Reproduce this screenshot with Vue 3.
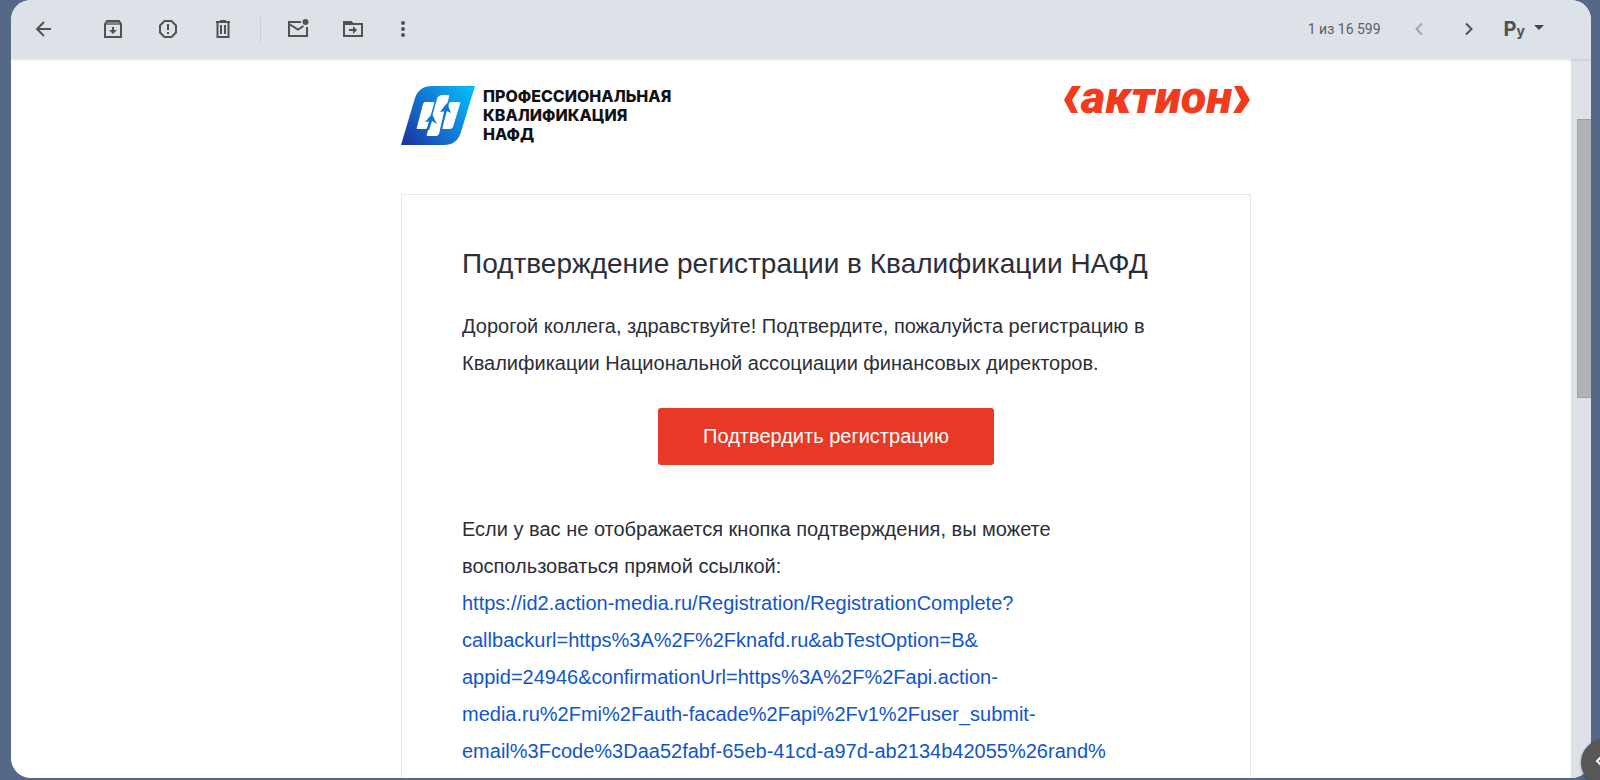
<script setup>
import { ref } from "vue";

const counter = ref("1 из 16 599");
const confirmLink =
  "https://id2.action-media.ru/Registration/RegistrationComplete?callbackurl=https%3A%2F%2Fknafd.ru&abTestOption=B&appid=24946";

// адрес разбит на строки так, как его переносит письмо
const linkLines = [
  "https://id2.action-media.ru/Registration/RegistrationComplete?",
  "callbackurl=https%3A%2F%2Fknafd.ru&abTestOption=B&",
  "appid=24946&confirmationUrl=https%3A%2F%2Fapi.action-",
  "media.ru%2Fmi%2Fauth-facade%2Fapi%2Fv1%2Fuser_submit-",
  "email%3Fcode%3Daa52fabf-65eb-41cd-a97d-ab2134b42055%26rand%",
];
</script>

<template>
  <div class="page">
    <main class="panel">
      <header class="toolbar">
        <button class="icon-button back" aria-label="Назад">
          <svg viewBox="0 0 20 20"><path d="M18 10H4M11 3l-7 7 7 7" class="stroke" /></svg>
        </button>
        <button class="icon-button" aria-label="Архивировать">
          <svg viewBox="0 0 20 20">
            <path d="M2 5l2-3h12l2 3v13H2z" class="stroke" />
            <path d="M2 3h16v3H2z" opacity=".65" />
            <path d="M9 8h2v3h3l-4 4-4-4h3z" />
          </svg>
        </button>
        <button class="icon-button" aria-label="В спам">
          <svg viewBox="0 0 20 20">
            <path d="M6.5 2h7L18 6.500v7L13.500 18h-7L2 13.500v-7z" class="stroke" />
            <path d="M9 5h2v6H9zM9 13h2v2H9z" />
          </svg>
        </button>
        <button class="icon-button" aria-label="Удалить">
          <svg viewBox="0 0 20 20">
            <path d="M4.500 4v14h11V4M3 3h14M7 2h6" class="stroke" />
            <path d="M7 6h2v9H7zM11 6h2v9h-2z" />
          </svg>
        </button>
        <span class="divider"></span>
        <button class="icon-button" aria-label="Отметить как непрочитанное">
          <svg viewBox="0 0 22 20" class="wide">
            <path d="M14 3H2v14h18V8M2 5l9 5.500 5.500-3.500" class="stroke" />
            <circle cx="18.500" cy="3" r="3" />
          </svg>
        </button>
        <button class="icon-button" aria-label="Переместить">
          <svg viewBox="0 0 22 20" class="wide">
            <path d="M2 3h7l2 2h9v12H2z" class="stroke" />
            <path d="M1 3h8l2 3H1zM7 10h4V7l4 4-4 4v-3H7z" />
          </svg>
        </button>
        <button class="icon-button more" aria-label="Ещё">
          <svg viewBox="0 0 20 20">
            <circle cx="10" cy="4" r="2" /><circle cx="10" cy="10" r="2" /><circle cx="10" cy="16" r="2" />
          </svg>
        </button>

        <span class="counter">{{ counter }}</span>
        <button class="icon-button" aria-label="Предыдущее" disabled>
          <svg viewBox="0 0 20 20"><path d="M13 4.500L7.500 10l5.500 5.500" class="stroke" /></svg>
        </button>
        <button class="icon-button" aria-label="Следующее">
          <svg viewBox="0 0 20 20"><path d="M7 4.500l5.500 5.500L7 15.500" class="stroke" /></svg>
        </button>
        <button class="language" aria-label="Способ ввода">
          <span class="language-name">Р<small>у</small></span>
          <svg viewBox="0 0 10 8"><path d="M0 0h10L5 5z" /></svg>
        </button>
      </header>

      <div class="scroll-area">
        <article class="mail">
          <div class="logos">
            <div class="nafd">
              <svg viewBox="0 0 74 59">
                <defs>
                  <linearGradient id="nafd-fill" x1="0" y1=".8" x2="1" y2=".2">
                    <stop offset="0" stop-color="#1b3aa6" />
                    <stop offset=".5" stop-color="#1379d4" />
                    <stop offset="1" stop-color="#05b8f8" />
                  </linearGradient>
                </defs>
                <path d="M0 59L14 12Q18 0 31 0H74L60 46Q56 59 43 59z" fill="url(#nafd-fill)" />
                <g fill="#fff">
                  <path d="M24 16h8q2 0 1 2l-7 24q0 1-2 1h-7q-2 0-1-2l6-23q1-2 2-2z" />
                  <path d="M42 9h5q2 0 1 2l-10 37q-1 2-3 2h-8q-2 0-1-2l10-35q1-4 6-4z" />
                  <path d="M50 16h8q2 0 1 2l-7 23q-1 2-3 2h-7q-2 0-1-2l7-23q0-2 2-2z" />
                </g>
                <path d="M27 44l4-12M40 44l5-22" fill="none" stroke="#1375d0" stroke-width="2" />
                <path d="M31 28l5 10-5-3-7 1zM46 17l4 10-4-2-7 1z" fill="#1375d0" />
              </svg>
              <div class="nafd-name">ПРОФЕССИОНАЛЬНАЯ<br />КВАЛИФИКАЦИЯ<br />НАФД</div>
            </div>
            <svg class="action-logo" viewBox="0 0 188 28">
              <path d="M9 0h9L9 14l6 13H8L1 14z" />
              <path d="M171 0h8l8 14-9 13h-8l8-13z" />
              <text x="18" y="27">актион</text>
            </svg>
          </div>

          <section class="card">
            <h1>Подтверждение регистрации в Квалификации НАФД</h1>
            <p>
              Дорогой коллега, здравствуйте! Подтвердите, пожалуйста регистрацию в
              Квалификации Национальной ассоциации финансовых директоров.
            </p>
            <button class="confirm">Подтвердить регистрацию</button>
            <p>
              Если у вас не отображается кнопка подтверждения, вы можете<br />
              воспользоваться прямой ссылкой:<br />
              <a :href="confirmLink">
                <template v-for="line in linkLines" :key="line">{{ line }}<br /></template>
              </a>
            </p>
          </section>
        </article>
        <div class="scrollbar"><div class="thumb"></div></div>
      </div>
    </main>
    <button class="side-toggle" aria-label="Показать боковую панель">
      <svg viewBox="0 0 16 16"><path d="M10 2L4 8l6 6" class="stroke" /></svg>
    </button>
  </div>
</template>

<style>
body {
  margin: 0;
}
</style>

<style scoped>
.page {
  position: relative;
  box-sizing: border-box;
  height: 100vh;
  padding: 0 9px 2px 11px;
  overflow: hidden;
  background: #566888;
  font-family: "Liberation Sans", Arial, sans-serif;
}

.panel {
  display: flex;
  flex-direction: column;
  height: 100%;
  overflow: hidden;
  border-radius: 20px;
  background: #fff;
}

button {
  padding: 0;
  border: none;
  background: none;
  font-family: inherit;
  cursor: pointer;
}

/* Панель инструментов */
.toolbar {
  z-index: 1;
  box-sizing: border-box;
  display: flex;
  flex: none;
  align-items: center;
  height: 59px;
  padding: 0 47px 1px 12px;
  background: #dde1e8;
  box-shadow: 0 1px 3px rgba(0, 0, 0, 0.12);
}

.icon-button {
  display: flex;
  flex: none;
  align-items: center;
  justify-content: center;
  width: 40px;
  height: 40px;
  margin-right: 15px;
}

.icon-button svg {
  width: 20px;
  height: 20px;
  fill: #505352;
}

.icon-button svg.wide {
  width: 22px;
}

.icon-button:disabled {
  margin-right: 10px;
  opacity: 0.4;
}

.icon-button .stroke,
.side-toggle .stroke {
  fill: none;
  stroke: #505352;
  stroke-width: 2;
}

.back {
  margin-right: 30px;
}

.more {
  margin-right: auto;
  margin-left: -5px;
}

.divider {
  width: 1px;
  height: 25px;
  margin: 0 17px 0 2px;
  background: #c9cdd4;
}

.counter {
  margin-right: 18px;
  color: #5e6063;
  font-family: Roboto, sans-serif;
  font-size: 14px;
}

.language {
  display: flex;
  align-items: center;
  gap: 9px;
}

.language-name {
  color: #505352;
  font-family: Inter, sans-serif;
  font-size: 20px;
  font-weight: 700;
}

.language-name small {
  font-size: 14px;
}

.language svg {
  width: 10px;
  height: 8px;
  fill: #444746;
}

/* Письмо */
.scroll-area {
  display: flex;
  flex: 1;
  min-height: 0;
}

.mail {
  display: flex;
  flex: 1;
  flex-direction: column;
  align-items: center;
  padding: 27px 0 0 70px;
  overflow: hidden;
}

.logos {
  display: flex;
  align-items: flex-start;
  justify-content: space-between;
  width: 100%;
  max-width: 850px;
  margin-bottom: 49px;
}

.nafd {
  display: flex;
  gap: 8px;
}

.nafd svg {
  width: 74px;
  height: 59px;
}

.nafd-name {
  padding-top: 1px;
  color: #111;
  font-family: Inter, sans-serif;
  font-size: 16px;
  font-weight: 800;
  line-height: 19px;
}

.action-logo {
  width: 188px;
  height: 28px;
  overflow: visible;
  fill: #f23a1d;
  font-family: Roboto, sans-serif;
  font-size: 47px;
  font-style: italic;
  font-weight: 900;
}

.card {
  box-sizing: border-box;
  width: 100%;
  max-width: 850px;
  padding: 49px 60px;
  border: 1px solid #e8e8e8;
  color: #2b2e38;
}

h1 {
  margin: 0 0 24px;
  font-size: 28px;
  font-weight: 400;
  line-height: 40px;
}

p {
  margin: 0;
  font-size: 20px;
  line-height: 37px;
}

.confirm {
  display: block;
  width: 336px;
  height: 57px;
  margin: 26px auto 46px;
  border-radius: 3px;
  background: #e73925;
  color: #fff;
  font-size: 20px;
}

a {
  color: #1155cc;
  text-decoration: none;
}

/* Полоса прокрутки */
.scrollbar {
  box-sizing: border-box;
  flex: none;
  width: 20px;
  padding: 60px 0 0 6px;
  background: #dde1e8;
}

.thumb {
  box-sizing: border-box;
  height: 279px;
  border: 1px solid #9fa1a5;
  border-right: none;
  background: #afb1b5;
}

.side-toggle {
  position: absolute;
  right: -28px;
  bottom: -6px;
  z-index: 2;
  width: 47px;
  height: 47px;
  border-radius: 50%;
  background: #575757;
  box-shadow: 0 1px 3px rgba(0, 0, 0, 0.4);
  text-align: left;
}

.side-toggle svg {
  width: 16px;
  height: 16px;
  margin-left: 12px;
}

.side-toggle .stroke {
  stroke: #fff;
}
</style>
